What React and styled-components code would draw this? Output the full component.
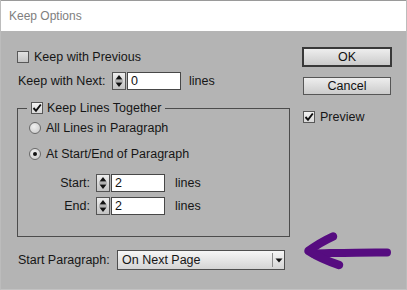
import React from "react";
import styled, { createGlobalStyle } from "styled-components";

const Global = createGlobalStyle`
  html, body {
    margin: 0;
    padding: 0;
  }
  body {
    width: 407px;
    height: 290px;
    overflow: hidden;
    font-family: "Liberation Sans", Arial, sans-serif;
  }
`;

const Window = styled.div`
  position: relative;
  width: 407px;
  height: 290px;
  box-sizing: border-box;
  background-color: #b4b4b4;
  border-left: 1px solid #bcbcbc;
  border-right: 1px solid #bcbcbc;
  border-bottom: 1px solid #c2c2c2;
  display: flex;
  flex-direction: column;
  color: #161616;
  font-size: 12.5px;
`;

const TitleBar = styled.div`
  height: 31px;
  box-sizing: border-box;
  background-color: #fff;
  border-top: 1px solid #9a9a9a;
  padding-left: 8px;
  display: flex;
  align-items: center;
  font-size: 12px;
  color: #7e7e7e;
`;

const Content = styled.div`
  display: flex;
  padding: 16px 0 0 16px;
  gap: 12px;
`;

const LeftCol = styled.div`
  width: 273px;
  padding-top: 1px;
  display: flex;
  flex-direction: column;
`;

const RightCol = styled.div`
  width: 90px;
  display: flex;
  flex-direction: column;
`;

const Row = styled.div`
  display: flex;
  align-items: center;
  height: 18px;
  margin-top: ${(p) => p.$mt || 0}px;
  white-space: nowrap;
`;

const Label = styled.span`
  width: ${(p) => (p.$w ? `${p.$w}px` : "auto")};
  text-align: ${(p) => p.$align || "left"};
  padding-left: ${(p) => p.$pl || 0}px;
  padding-right: ${(p) => p.$pr || 0}px;
  box-sizing: border-box;
  flex: none;
`;

const Box = styled.span`
  width: 12px;
  height: 12px;
  box-sizing: border-box;
  border: 1px solid #585858;
  background: ${(p) =>
    p.$checked
      ? "linear-gradient(#f2f2f2, #d8d8d8)"
      : "linear-gradient(#e2e2e2, #c4c4c4)"};
  display: inline-flex;
  align-items: center;
  justify-content: center;
  flex: none;
  margin-right: ${(p) => p.$gap || 5}px;
`;

const RadioDot = styled.span`
  width: 12px;
  height: 12px;
  box-sizing: border-box;
  border-radius: 50%;
  border: 1px solid #6a6a6a;
  background: radial-gradient(circle at 40% 35%, #f0f0f0, #c6c6c6);
  display: inline-flex;
  align-items: center;
  justify-content: center;
  flex: none;
  margin-right: 5px;
  &::after {
    content: "";
    display: ${(p) => (p.$on ? "block" : "none")};
    width: 4px;
    height: 4px;
    border-radius: 50%;
    background: #111;
  }
`;

const SpinBox = styled.span`
  width: 14px;
  height: 18px;
  box-sizing: border-box;
  border: 1px solid #545454;
  background: linear-gradient(#ededed, #c2c2c2);
  display: flex;
  align-items: center;
  justify-content: center;
  flex: none;
`;

const Field = styled.input`
  width: ${(p) => p.$w || 54}px;
  height: 18px;
  box-sizing: border-box;
  margin: 0 0 0 1px;
  border: 1px solid #474747;
  background: #fff;
  padding: 0 3px;
  font-family: inherit;
  font-size: 12.5px;
  color: #111;
  outline: none;
`;

const Unit = styled.span`
  margin-left: ${(p) => p.$ml || 9}px;
`;

const Group = styled.fieldset`
  margin: 10px 0 0 0;
  min-width: 0;
  width: 273px;
  box-sizing: border-box;
  border: 1px solid #4c4c4c;
  padding: 3px 10px 21px 11px;
`;

const Legend = styled.legend`
  height: 16px;
  padding: 0 4px;
  margin-left: -2px;
  display: flex;
  align-items: center;
  white-space: nowrap;
`;

const Select = styled.div`
  width: 168px;
  height: 20px;
  box-sizing: border-box;
  border: 1px solid #4e4e4e;
  background: linear-gradient(#f6f6f6, #d4d4d4);
  display: flex;
  align-items: center;
  padding-left: 4px;
`;

const SelectArrow = styled.span`
  margin-left: auto;
  height: 14px;
  width: 11px;
  border-left: 1px solid #8a8a8a;
  display: flex;
  align-items: center;
  justify-content: center;
`;

const Button = styled.button`
  width: ${(p) => (p.$primary ? 90 : 88)}px;
  height: ${(p) => (p.$primary ? 20 : 18)}px;
  align-self: center;
  box-sizing: border-box;
  margin-top: ${(p) => p.$mt || 0}px;
  padding: 0;
  border: ${(p) => (p.$primary ? "2px solid #393939" : "1px solid #565656")};
  background: linear-gradient(#eeeeee, #cbcbcb);
  font-family: inherit;
  font-size: 12.5px;
  color: #111;
`;

const PreviewRow = styled(Row)`
  padding-left: 1px;
`;

const Annotation = styled.svg`
  position: absolute;
  left: 300px;
  top: 230px;
  pointer-events: none;
`;

function Check({ checked, gap }) {
  return (
    <Box $checked={checked} $gap={gap}>
      {checked && (
        <svg width="10" height="10" viewBox="0 0 10 10">
          <path
            d="M1.5 5 L4 7.8 L8.8 1.5"
            fill="none"
            stroke="#0d0d0d"
            strokeWidth="1.9"
          />
        </svg>
      )}
    </Box>
  );
}

function Spinner() {
  return (
    <SpinBox>
      <svg width="12" height="16" viewBox="0 0 12 16">
        <path d="M2.5 6.5 L9.5 6.5 L6 2 Z" fill="#111" />
        <line x1="2" y1="8" x2="10" y2="8" stroke="#8c8c8c" strokeWidth="1" />
        <path d="M2.5 9.5 L9.5 9.5 L6 14 Z" fill="#111" />
      </svg>
    </SpinBox>
  );
}

function NumberField({ value, width }) {
  return <Field $w={width} defaultValue={value} readOnly />;
}

export default function App() {
  return (
    <>
      <Global />
      <Window>
        <TitleBar>Keep Options</TitleBar>
        <Content>
          <LeftCol>
            <Row>
              <Check />
              <span>Keep with Previous</span>
            </Row>
            <Row $mt={6}>
              <Label $w={95} $pl={1}>
                Keep with Next:
              </Label>
              <Spinner />
              <NumberField value="0" width={54} />
              <Unit $ml={8}>lines</Unit>
            </Row>
            <Group>
              <Legend>
                <Check checked gap={4} />
                <span>Keep Lines Together</span>
              </Legend>
              <Row>
                <RadioDot />
                <span>All Lines in Paragraph</span>
              </Row>
              <Row $mt={8}>
                <RadioDot $on />
                <span>At Start/End of Paragraph</span>
              </Row>
              <Row $mt={11}>
                <Label $w={67} $align="right" $pr={6}>
                  Start:
                </Label>
                <Spinner />
                <NumberField value="2" />
                <Unit $ml={10}>lines</Unit>
              </Row>
              <Row $mt={5}>
                <Label $w={67} $align="right" $pr={6}>
                  End:
                </Label>
                <Spinner />
                <NumberField value="2" />
                <Unit $ml={10}>lines</Unit>
              </Row>
            </Group>
            <Row $mt={14}>
              <Label $w={100} $pl={1}>
                Start Paragraph:
              </Label>
              <Select>
                <span>On Next Page</span>
                <SelectArrow>
                  <svg width="8" height="5" viewBox="0 0 8 5">
                    <path d="M0.5 0.5 L7.5 0.5 L4 4.5 Z" fill="#111" />
                  </svg>
                </SelectArrow>
              </Select>
            </Row>
          </LeftCol>
          <RightCol>
            <Button $primary>OK</Button>
            <Button $mt={10}>Cancel</Button>
            <PreviewRow $mt={13}>
              <Check checked gap={5} />
              <span>Preview</span>
            </PreviewRow>
          </RightCol>
        </Content>
        <Annotation width="95" height="45" viewBox="0 0 95 45">
          <g
            fill="none"
            stroke="#560c80"
            strokeLinecap="round"
            strokeLinejoin="round"
          >
            <path d="M86 22.5 C 66 22, 36 23, 12 23.5" strokeWidth="8" />
            <path
              d="M32 6.5 Q 18 13 7.5 21 Q 20 29 38 35"
              strokeWidth="8.5"
            />
          </g>
        </Annotation>
      </Window>
    </>
  );
}
